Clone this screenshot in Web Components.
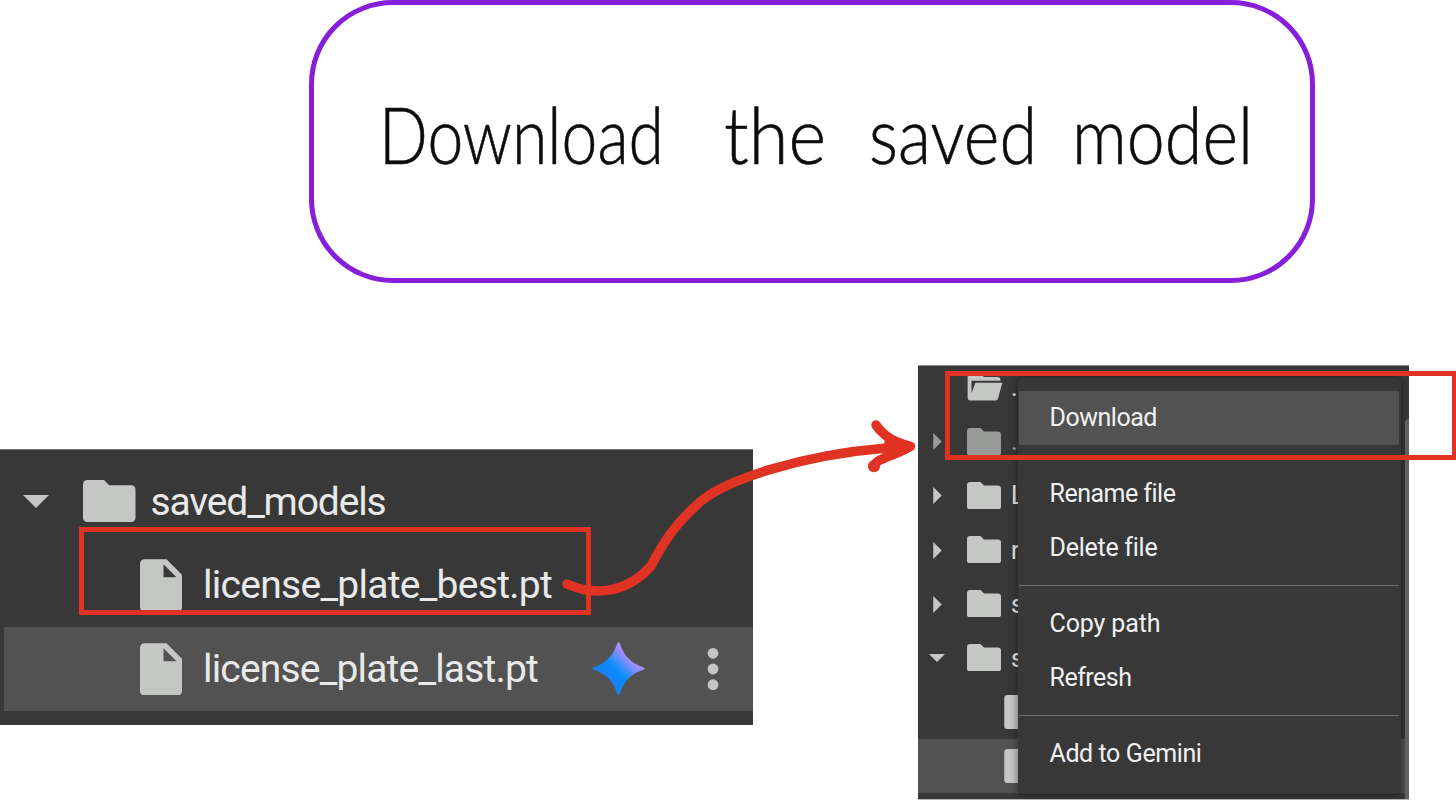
<!DOCTYPE html>
<html lang="en">
<head>
<meta charset="utf-8">
<title>Download the saved model</title>
<style>
  body {
    margin: 0;
    background: #fff;
    font-family: Roboto, "Open Sans", sans-serif;
    overflow: hidden;
  }
</style>
</head>
<body>
<guide-board></guide-board>

<script>
const icons = {
  folder: /*html*/`<svg viewBox="2 4 20 16" preserveAspectRatio="none"><path d="M3.6 4H10l2 2h8.4C21.3 6 22 6.7 22 7.6v10.8c0 .9-.7 1.6-1.6 1.6H3.6C2.7 20 2 19.3 2 18.400V5.600C2 4.700 2.700 4 3.600 4z"/></svg>`,
  open: /*html*/`<svg viewBox="0 0 36 28"><path d="M2 0H13L17 3H31Q34 3 34 6V7H4V20L8 9H36L31.500 25.500Q31 27.500 29 27.500H2.500Q0 27.500 0 25V2Q0 0 2 0Z"/></svg>`,
  file: /*html*/`<svg viewBox="0 0 42 52"><path fill-rule="evenodd" d="M5 0H26.500L42 15.500V47.500Q42 52 37.500 52H4.500Q0 52 0 47.500V5Q0 0 5 0ZM23.500 5V18H36.500Z"/></svg>`,
  down: /*html*/`<svg viewBox="0 0 26 13"><path d="M0 0H26L13 13Z"/></svg>`,
  right: /*html*/`<svg viewBox="0 0 9 18"><path d="M0 0V18L9 9Z"/></svg>`,
}

class FitText extends HTMLElement {
  /**
   * A single line of text that takes exactly the given width.
   * Spreads the difference over the letters, or squeezes them with mode="scale"
   */

  constructor() {
    super()
    this.attachShadow({ mode: "open" })
    this.shadowRoot.innerHTML = /*html*/`
      <style>
        :host { display: block; white-space: nowrap; }
        span { display: inline-block; transform-origin: 0 50%; }
      </style>
      <span><slot></slot></span>
    `
    this.line = this.shadowRoot.querySelector('span')
  }

  connectedCallback() {
    const width = Number(this.getAttribute('width'))
    if (!width) return

    this.style.width = `${width}px`
    const natural = this.line.getBoundingClientRect().width

    if (this.getAttribute('mode') === 'scale') {
      this.line.style.transform = `scaleX(${width / natural})`
    } else {
      this.line.style.letterSpacing = `${(width - natural) / this.textContent.length}px`
    }
  }
}

class NoteCard extends HTMLElement {
  constructor() {
    super()
    this.attachShadow({ mode: "open" })
    this.shadowRoot.innerHTML = /*html*/`
      <style>
        :host {
          display: flex;
          box-sizing: border-box;
          width: 1006px;
          height: 283px;
          padding: 79px 0 0 65px;
          border: 5.300px solid #871edc;
          border-radius: 84px;
          color: #0c0c0c;
          font: 300 78px/100px Lato, sans-serif;
          -webkit-text-stroke: 0.600px #0c0c0c;
        }
        .the { margin-left: 60px; }
        .saved { margin-left: 43px; }
        .model { margin-left: 35px; }
      </style>
      <fit-text width="285" mode="scale">Download</fit-text>
      <fit-text class="the" width="102" mode="scale">the</fit-text>
      <fit-text class="saved" width="168" mode="scale">saved</fit-text>
      <fit-text class="model" width="181" mode="scale">model</fit-text>
    `
  }
}

class TreeRow extends HTMLElement {
  // attributes: arrow (down | right), icon (folder | open | file)
  constructor() {
    super()
    this.attachShadow({ mode: "open" })
  }

  connectedCallback() {
    const arrow = this.getAttribute('arrow')
    const icon = this.getAttribute('icon')
    this.shadowRoot.innerHTML = /*html*/`
      <style>
        :host {
          display: flex;
          align-items: center;
          box-sizing: border-box;
          flex: none;
          height: var(--row-height);
          color: #e8e9e8;
          fill: #c5c7c4;
        }
        :host([selected]) { background: #525252; }
        :host([dim]) { color: #a3a5a2; fill: #999b98; }
        svg { display: block; width: 100%; height: 100%; }
        .arrow {
          flex: none;
          display: grid;
          place-items: center;
          width: var(--arrow-cell);
          margin-right: var(--arrow-gap);
        }
        .arrow .down { width: var(--arrow-size); height: calc(var(--arrow-size) / 2); }
        .arrow .right { width: 9px; height: 17px; }
        .icon { flex: none; margin-right: var(--gap); }
        .folder { width: var(--folder-width); height: var(--folder-height); margin-top: -1px; }
        .open { width: 36px; height: 27px; margin-right: calc(var(--gap) - 2px); }
        .file { width: var(--file-width); height: var(--file-height); margin-left: var(--indent); margin-right: var(--file-gap); }
      </style>
      <div class="arrow"><div class="${arrow}">${icons[arrow] ?? ''}</div></div>
      <div class="icon ${icon}">${icons[icon]}</div>
      <slot></slot>
    `
  }
}

class ModelTree extends HTMLElement {
  constructor() {
    super()
    this.attachShadow({ mode: "open" })
    this.shadowRoot.innerHTML = /*html*/`
      <style>
        :host {
          --row-height: 83.500px;
          --arrow-cell: 72px;
          --arrow-gap: 11px;
          --arrow-size: 26px;
          --folder-width: 52.500px;
          --folder-height: 42px;
          --file-width: 42px;
          --file-height: 52.500px;
          --gap: 15px;
          --file-gap: 21px;
          --indent: 57px;

          display: block;
          position: relative;
          box-sizing: border-box;
          width: 753px;
          height: 276px;
          padding-top: 10px;
          background: #383838;
          border-top: 1px solid #777;
          font-size: 39px;
          line-height: 60px;
        }
        tree-row[selected] { --arrow-cell: 68px; margin-left: 4px; }
        .spark { width: 53px; height: 53px; margin-left: 54px; }
        .dots { width: 12px; height: 44px; margin-left: 61.500px; }
        .mark {
          position: absolute;
          left: 79px;
          top: 77px;
          box-sizing: border-box;
          width: 512px;
          height: 88px;
          border: 5.400px solid #e03323;
        }
      </style>
      <tree-row arrow="down" icon="folder"><fit-text width="235">saved_models</fit-text></tree-row>
      <tree-row icon="file"><fit-text width="349">license_plate_best.pt</fit-text></tree-row>
      <tree-row icon="file" selected>
        <fit-text width="335">license_plate_last.pt</fit-text>
        <svg class="spark" viewBox="0 0 53 53">
          <defs>
            <linearGradient id="spark" x1="10" y1="42" x2="42" y2="10" gradientUnits="userSpaceOnUse">
              <stop offset="0" stop-color="#2077f5"/>
              <stop offset=".45" stop-color="#0b8dff"/>
              <stop offset=".85" stop-color="#ac8fff"/>
              <stop offset="1" stop-color="#b795f5"/>
            </linearGradient>
          </defs>
          <path fill="url(#spark)" d="M26.500 0Q27.500 0 28.200 2.500C32 14 39 21 51 25.200Q53 26 53 26.500Q53 27 51 27.800C39 32 32 39 28.200 50.500Q27.500 53 26.500 53Q25.500 53 24.800 50.500C21 39 14 32 2 27.800Q0 27 0 26.500Q0 26 2 25.200C14 21 21 14 24.800 2.500Q25.500 0 26.500 0Z"/>
        </svg>
        <svg class="dots" viewBox="0 0 12 44">
          <circle cx="6" cy="6.300" r="5.400"/><circle cx="6" cy="22" r="5.400"/><circle cx="6" cy="37.700" r="5.400"/>
        </svg>
      </tree-row>
      <div class="mark"></div>
    `
  }
}

class ContextMenu extends HTMLElement {
  constructor() {
    super()
    this.attachShadow({ mode: "open" })
    this.shadowRoot.innerHTML = /*html*/`
      <style>
        :host {
          display: flex;
          flex-direction: column;
          box-sizing: border-box;
          padding: 13px 2px 0 1px;
          background: #383838;
          border-radius: 5px;
          box-shadow: 0 1px 7px 1px #0006;
          color: #f1f1f1;
          font-size: 25px;
        }
        .item {
          display: flex;
          align-items: center;
          height: 54px;
          padding-left: 30.500px;
        }
        .active {
          box-sizing: border-box;
          padding-bottom: 2px;
          margin-bottom: 21.500px;
          background: #525252;
        }
        hr { width: 100%; height: 1px; margin: 10.500px 0; border: 0; background: #6d6e6d; }
      </style>
      <div class="item active"><fit-text width="107.500">Download</fit-text></div>
      <div class="item"><fit-text width="125">Rename file</fit-text></div>
      <div class="item"><fit-text width="107">Delete file</fit-text></div>
      <hr>
      <div class="item"><fit-text width="111">Copy path</fit-text></div>
      <div class="item"><fit-text width="82">Refresh</fit-text></div>
      <hr>
      <div class="item"><fit-text width="152">Add to Gemini</fit-text></div>
    `
  }
}

class FilePanel extends HTMLElement {
  constructor() {
    super()
    this.attachShadow({ mode: "open" })
    this.shadowRoot.innerHTML = /*html*/`
      <style>
        :host {
          --row-height: 54.100px;
          --arrow-cell: 38px;
          --arrow-gap: 11px;
          --arrow-size: 16px;
          --folder-width: 34px;
          --folder-height: 27.500px;
          --file-width: 28px;
          --file-height: 34px;
          --gap: 10px;
          --file-gap: 14px;
          --indent: 37px;

          display: block;
          position: relative;
          width: 491px;
          height: 435px;
          font-size: 25px;
        }
        .panel {
          position: relative;
          box-sizing: border-box;
          height: 100%;
          overflow: hidden;
          background: #383838;
          border-top: 1px solid #8b908d;
          border-bottom: 1px solid #b5b5b5;
        }
        .rows { margin-top: -5.300px; }
        context-menu { position: absolute; left: 100px; top: 12px; width: 383px; height: 416px; }
        .scrollbar {
          position: absolute;
          left: 487px;
          top: 53px;
          bottom: 0;
          width: 4px;
          background: #606060;
          border-radius: 4px 0 0 0;
        }
        .mark {
          position: absolute;
          left: 26.500px;
          top: 6px;
          box-sizing: border-box;
          width: 512px;
          height: 88.500px;
          border: 5.500px solid #e03323;
        }
      </style>
      <div class="panel">
        <div class="rows">
          <tree-row icon="open">.</tree-row>
          <tree-row arrow="right" icon="folder" dim>.</tree-row>
          <tree-row arrow="right" icon="folder">L</tree-row>
          <tree-row arrow="right" icon="folder">r</tree-row>
          <tree-row arrow="right" icon="folder">s</tree-row>
          <tree-row arrow="down" icon="folder">s</tree-row>
          <tree-row icon="file"></tree-row>
          <tree-row icon="file" selected></tree-row>
        </div>
        <context-menu></context-menu>
        <div class="scrollbar"></div>
      </div>
      <div class="mark"></div>
    `
  }
}

class GuideBoard extends HTMLElement {
  constructor() {
    super()
    this.attachShadow({ mode: "open" })
    this.shadowRoot.innerHTML = /*html*/`
      <style>
        :host {
          display: grid;
          grid-template-rows: 283px 1fr;
          row-gap: 82px;
          position: relative;
          box-sizing: border-box;
          width: 1456px;
          height: 801px;
          overflow: hidden;
        }
        note-card { margin-left: 309px; }
        .panels { display: flex; align-items: flex-start; }
        model-tree { flex: none; margin-top: 84px; }
        file-panel { flex: none; margin-left: 165px; }
        .arrow {
          position: absolute;
          left: 0;
          top: 0;
          fill: none;
          stroke: #e03323;
          stroke-width: 9.500;
          stroke-linecap: round;
          stroke-linejoin: round;
        }
      </style>
      <note-card></note-card>
      <div class="panels">
        <model-tree></model-tree>
        <file-panel></file-panel>
      </div>
      <svg class="arrow" width="1456" height="801">
        <path d="M567 584C596 597 628 592 651 566C663 543 674 525 700 502C725 480 801 455 887 448"/>
        <path d="M876 425C883 435 891 441 910.500 446.300C899 453 886 457 879 460.500Q875 463 874 466"/>
        <path stroke-width="12" d="M874 466.200V466"/>
        <path fill="#e03323" stroke="none" d="M885 438L910 446.500L882 458Z"/>
      </svg>
    `
  }
}

customElements.define('fit-text', FitText)
customElements.define('note-card', NoteCard)
customElements.define('tree-row', TreeRow)
customElements.define('model-tree', ModelTree)
customElements.define('context-menu', ContextMenu)
customElements.define('file-panel', FilePanel)
customElements.define('guide-board', GuideBoard)
</script>
</body>
</html>
